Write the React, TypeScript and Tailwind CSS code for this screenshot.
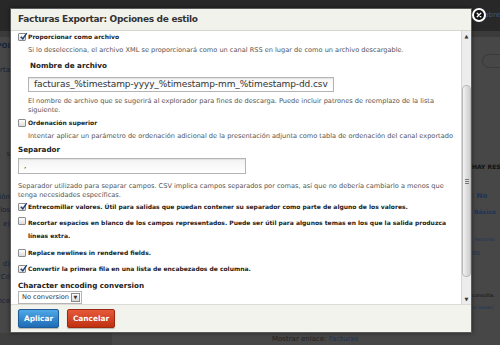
import React from "react";

const FONT = "font-['DejaVu_Sans',sans-serif]";

function Checkbox({ checked }: { checked?: boolean }) {
  return (
    <span className="relative flex h-[8px] w-[8px] shrink-0 items-center justify-center rounded-[1px] border border-[#8c8c8c] bg-gradient-to-b from-[#ffffff] to-[#dcdcdc]">
      {checked && (
        <svg viewBox="0 0 10 10" className="absolute -top-[2px] left-0 h-[9px] w-[9px]">
          <path d="M2 5.2 L4.2 7.6 L8.6 1.2" fill="none" stroke="#1f3f75" strokeWidth="1.6" />
        </svg>
      )}
    </span>
  );
}

function CheckRow({
  checked,
  children,
  className = "",
}: {
  checked?: boolean;
  children: React.ReactNode;
  className?: string;
}) {
  return (
    <div className={`flex items-start gap-[2px] ${className}`}>
      <div className="pt-[1px]">
        <Checkbox checked={checked} />
      </div>
      <div className="whitespace-nowrap text-[6px] font-bold leading-[10px] text-[#222]">{children}</div>
    </div>
  );
}

function Desc({ children, className = "" }: { children: React.ReactNode; className?: string }) {
  return <div className={`whitespace-nowrap text-[6.6px] leading-[9px] text-[#555] ${className}`}>{children}</div>;
}

function Heading({ children, className = "" }: { children: React.ReactNode; className?: string }) {
  return <div className={`text-[7.2px] font-bold leading-[10px] text-[#222] ${className}`}>{children}</div>;
}

function Scrollbar() {
  return (
    <div className="flex w-[10px] shrink-0 flex-col border-l border-[#d6d6d6] bg-[#ececec]">
      <div className="flex h-[10px] items-center justify-center text-[5px] leading-none text-[#333]">▲</div>
      <div className="h-[44px]" />
      <div className="flex h-[192px] items-center justify-center rounded-[4px] border border-[#b9b9b9] bg-gradient-to-r from-[#f4f4f4] via-[#dedede] to-[#cfcfcf]">
        <div className="flex flex-col gap-[1px]">
          <div className="h-px w-[4px] bg-[#777]" />
          <div className="h-px w-[4px] bg-[#777]" />
          <div className="h-px w-[4px] bg-[#777]" />
        </div>
      </div>
      <div className="flex-1" />
      <div className="flex h-[10px] items-center justify-center text-[5px] leading-none text-[#333]">▼</div>
    </div>
  );
}

function Dialog() {
  return (
    <div className="absolute left-[10px] top-[8px] flex h-[325px] w-[462px] flex-col border border-[#5a5a5a] bg-white shadow-[0_0_4px_rgba(0,0,0,0.5)]">
      {/* title bar */}
      <div className="flex h-[22px] shrink-0 items-center border-b border-[#d5d5cf] bg-[#f2f2ec] pl-[7px]">
        <span className="text-[9px] font-bold tracking-[-0.3px] text-[#333]">
          Facturas Exportar: Opciones de estilo
        </span>
      </div>

      {/* form body */}
      <div className="flex min-h-0 flex-1">
        <div className="min-w-0 flex-1 overflow-hidden pl-[7px] pr-[6px] pt-[1px]">
          <CheckRow checked>Proporcionar como archivo</CheckRow>
          <Desc className="mt-[4px] pl-[10px]">
            Si lo deselecciona, el archivo XML se proporcionará como un canal RSS en lugar de como un archivo descargable.
          </Desc>

          <div className="pl-[10px]">
            <Heading className="mt-[6px] pl-[2px]">Nombre de archivo</Heading>
            <div className="mt-[6px] flex h-[15px] w-[306px] items-center border border-[#b4b4b4] bg-gradient-to-b from-[#f6f6f6] to-white px-[5px] text-[9px] tracking-[-0.1px] text-[#333] shadow-[inset_0_1px_1px_rgba(0,0,0,0.08)]">
              facturas_%timestamp-yyyy_%timestamp-mm_%timestamp-dd.csv
            </div>
            <Desc className="mt-[5px]">
              El nombre de archivo que se sugerirá al explorador para fines de descarga. Puede incluir patrones de reemplazo de la lista
              <br />
              siguiente.
            </Desc>
          </div>

          <CheckRow className="mt-[3px]">Ordenación superior</CheckRow>
          <Desc className="mt-[4px] pl-[10px]">
            Intentar aplicar un parámetro de ordenación adicional de la presentación adjunta como tabla de ordenación del canal exportado
          </Desc>

          <Heading className="mt-[4px]">Separador</Heading>
          <div className="mt-[3px] flex h-[16px] w-[228px] items-center border border-[#b4b4b4] bg-gradient-to-b from-[#f3f3f3] to-white px-[5px] text-[7.4px] text-[#333] shadow-[inset_0_1px_1px_rgba(0,0,0,0.08)]">
            ,
          </div>
          <Desc className="mt-[8px]">
            Separador utilizado para separar campos. CSV implica campos separados por comas, así que no debería cambiarlo a menos que
            <br />
            tenga necesidades específicas.
          </Desc>

          <CheckRow checked className="mt-[2px]">
            Entrecomillar valores. Útil para salidas que puedan contener su separador como parte de alguno de los valores.
          </CheckRow>
          <CheckRow className="mt-[4px]">
            <span className="block leading-[13px]">
              Recortar espacios en blanco de los campos representados. Puede ser útil para algunos temas en los que la salida produzca
              <br />
              líneas extra.
            </span>
          </CheckRow>
          <CheckRow className="mt-[6px]">Replace newlines in rendered fields.</CheckRow>
          <CheckRow checked className="mt-[6px]">
            Convertir la primera fila en una lista de encabezados de columna.
          </CheckRow>

          <Heading className="mt-[7px]">Character encoding conversion</Heading>
          <div className="flex h-[13px] w-[64px] items-center justify-between border border-[#b4b4b4] bg-white pl-[3px] pr-[1px] text-[6.6px] text-[#333]">
            <span>No conversion</span>
            <span className="flex h-[9px] w-[9px] items-center justify-center border border-[#8a8a8a] bg-gradient-to-b from-white to-[#d8d8d8] text-[5px] leading-none">
              ▼
            </span>
          </div>
        </div>
        <Scrollbar />
      </div>

      {/* button pane */}
      <div className="flex h-[28px] shrink-0 items-center gap-[8px] border-t border-[#dcdcd4] bg-[#f3f3ed] pl-[7px]">
        <button className="h-[19px] w-[41px] rounded-[2px] border border-[#1d5c98] bg-gradient-to-b from-[#4fa8e6] to-[#1e6cb6] text-[7.4px] font-bold text-white shadow-[0_1px_1px_rgba(0,0,0,0.25)]">
          Aplicar
        </button>
        <button className="h-[19px] w-[48px] rounded-[2px] border border-[#9a2a12] bg-gradient-to-b from-[#e6593a] to-[#c0300f] text-[7.4px] font-bold text-white shadow-[0_1px_1px_rgba(0,0,0,0.25)]">
          Cancelar
        </button>
      </div>
    </div>
  );
}

function CloseButton() {
  return (
    <div className="absolute left-[472px] top-[8px] flex h-[14px] w-[14px] items-center justify-center rounded-full bg-white">
      <div className="flex h-[10px] w-[10px] items-center justify-center rounded-full bg-[#111]">
        <svg viewBox="0 0 10 10" className="h-[6px] w-[6px]">
          <path d="M2 2 L8 8 M8 2 L2 8" stroke="white" strokeWidth="2.2" strokeLinecap="round" />
        </svg>
      </div>
    </div>
  );
}

export default function App() {
  return (
    <div className={`relative h-[345px] w-[500px] overflow-hidden bg-[#474747] ${FONT}`}>
      {/* page behind the overlay */}
      <div className="flex h-full flex-col">
        <div className="h-[31px] shrink-0 bg-[#282828]">
          <div className="flex justify-end pt-[10px] text-[7px] text-[#3c5a78]">abre</div>
        </div>
        <div className="h-[6px] shrink-0 bg-[#3b3b3b]" />
        <div className="flex flex-1">
          <div className="flex w-[40px] shrink-0 flex-col items-end pr-[30px] text-[7px] text-[#15243a]">
            <div className="mt-[4px] whitespace-nowrap font-bold">POI</div>
            <div className="mt-[13px] whitespace-nowrap">orta</div>
            <div className="mt-[74px] whitespace-nowrap">s</div>
            <div className="mt-[32px] whitespace-nowrap">ción</div>
            <div className="mt-[3px] whitespace-nowrap">los</div>
            <div className="mt-[3px] whitespace-nowrap">e)</div>
            <div className="mt-[30px] whitespace-nowrap">d)</div>
            <div className="mt-[2px] whitespace-nowrap">[Có</div>
            <div className="mt-[14px] whitespace-nowrap">nce</div>
          </div>
          <div className="flex-1" />
          <div className="flex w-[28px] flex-col text-[7px] text-[#15243a]">
            <div className="ml-[10px] mt-[17px] h-[14px] w-[18px] rounded-l-full border border-r-0 border-[#3a3a3a]" />
            <div className="mt-[94px] whitespace-nowrap text-[6px] font-bold text-[#111]">HAY RES</div>
            <div className="mt-[20px] whitespace-nowrap">
              : <span className="font-bold text-[#1c3557]">No</span>
            </div>
            <div className="mt-[5px] whitespace-nowrap pl-[2px] text-[6px] font-bold text-[#1c3557]">Básico</div>
            <div className="mt-[20px] whitespace-nowrap text-[5px] text-[#1c3557]">_facturas</div>
            <div className="mt-[5px] whitespace-nowrap text-[#1c3557]">os</div>
            <div className="mt-[33px] whitespace-nowrap text-[5px] text-[#111]">consulta.</div>
            <div className="mt-[5px] whitespace-nowrap text-[5px] text-[#1c3557]">el usuari</div>
          </div>
        </div>
        <div className="flex h-[12px] shrink-0">
          <div className="w-[112px] bg-[#3f3f3f]" />
          <div className="flex-1 pl-[160px] pt-[1px] text-[7px] text-[#222]">
            Mostrar enlace: <span className="text-[#1c3557]">Facturas</span>
          </div>
        </div>
      </div>

      <Dialog />
      <CloseButton />
    </div>
  );
}
